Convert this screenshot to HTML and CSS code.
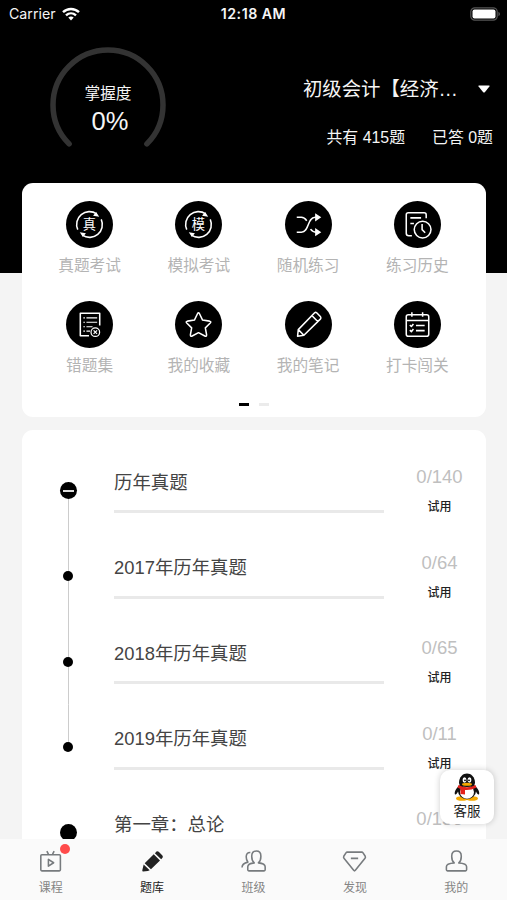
FILE: index.html
```html
<!DOCTYPE html>
<html lang="zh-CN">
<head>
    <meta charset="UTF-8">
    <meta name="viewport" content="width=device-width, initial-scale=1.0">
    <title>题库</title>
    <link rel="stylesheet" href="styles.css">
</head>
<body>
    <div class="app">
        <header class="header">
            <div class="status-bar">
                <div class="carrier">
                    <span>Carrier</span>
                    <svg width="18" height="14" viewBox="0 0 18 14" fill="none" stroke="#fff" stroke-width="2.4">
                        <path d="M1 5.200C5.500 .9 12.500 .9 17 5.200"/>
                        <path d="M4 8.400C6.900 5.700 11.100 5.700 14 8.400"/>
                        <path d="M6.300 10.600C7.900 9.100 10.100 9.100 11.700 10.600L9 13.500Z" fill="#fff" stroke="none"/>
                    </svg>
                </div>
                <span class="time">12:18 AM</span>
                <div class="battery">
                    <svg width="31" height="14" viewBox="0 0 31 14">
                        <rect x=".8" y=".8" width="26.400" height="12.400" rx="4" fill="none" stroke="#555" stroke-width="1.2"/>
                        <rect x="2.500" y="2.500" width="23" height="9" rx="2" fill="#fff"/>
                        <path d="M28.500 4.800C30.300 5.600 30.300 8.400 28.500 9.200Z" fill="#666"/>
                    </svg>
                </div>
            </div>
            <div class="summary">
                <div class="gauge">
                    <svg class="gauge-ring" width="118" height="118" viewBox="0 0 118 118">
                        <path d="M20.100 97.900A55 55 0 1 1 97.900 97.900" fill="none" stroke="#333" stroke-width="5.500" stroke-linecap="round"/>
                    </svg>
                    <div class="gauge-text">
                        <span class="gauge-label">掌握度</span>
                        <span class="gauge-value">0%</span>
                    </div>
                </div>
                <div class="course">
                    <div class="course-name">
                        <span>初级会计【经济…</span>
                        <svg width="12" height="8" viewBox="0 0 12 8"><path d="M1 .5H11Q12 .6 11.400 1.500L7 7Q6 8 5 7L.6 1.500Q0 .6 1 .5Z" fill="#fff"/></svg>
                    </div>
                    <div class="course-stats">
                        <span>共有 415题</span>
                        <span>已答 0题</span>
                    </div>
                </div>
            </div>
        </header>

        <main class="content">
            <section class="card shortcuts">
                <div class="shortcut-grid">
                    <div class="shortcut">
                        <div class="shortcut-icon">
                            <svg viewBox="0 0 46 46">
                                <path d="M11.500 28A12.500 12.500 0 0 1 30 12.600M34.500 18A12.500 12.500 0 0 1 16 33.400"/>
                                <path class="solid" d="M29.500 10.800L32.500 15.500L26.500 14.500ZM16.500 35.200L13.500 30.500L19.500 31.500Z"/>
                                <text x="23" y="27.600">真</text>
                            </svg>
                        </div>
                        <span>真题考试</span>
                    </div>
                    <div class="shortcut">
                        <div class="shortcut-icon">
                            <svg viewBox="0 0 46 46">
                                <path d="M11.500 28A12.500 12.500 0 0 1 30 12.600M34.500 18A12.500 12.500 0 0 1 16 33.400"/>
                                <path class="solid" d="M29.500 10.800L32.500 15.500L26.500 14.500ZM16.500 35.200L13.500 30.500L19.500 31.500Z"/>
                                <text x="23" y="27.600">模</text>
                            </svg>
                        </div>
                        <span>模拟考试</span>
                    </div>
                    <div class="shortcut">
                        <div class="shortcut-icon">
                            <svg viewBox="0 0 46 46">
                                <path d="M11.500 16H16C18.500 16 20 17.500 21.300 19.300M11.500 30.500H16C24 30.500 21.500 16 29.500 16H31M25 27.500C26.300 29.500 28 30.500 31 30.500"/>
                                <path class="solid" d="M29.500 12L35.500 16L29.500 20ZM29.500 26.500L35.500 30.500L29.500 34.500Z"/>
                            </svg>
                        </div>
                        <span>随机练习</span>
                    </div>
                    <div class="shortcut">
                        <div class="shortcut-icon">
                            <svg viewBox="0 0 46 46">
                                <path d="M31.500 17V13.500Q31.500 11.500 29.500 11.500H14Q12 11.500 12 13.500V31.500Q12 34 14.500 34H17.500M16 16.500H26.500M16 22H19.500"/>
                                <circle cx="28" cy="28" r="8.200"/>
                                <path d="M27.500 22.500V28L30.500 31"/>
                            </svg>
                        </div>
                        <span>练习历史</span>
                    </div>
                    <div class="shortcut">
                        <div class="shortcut-icon">
                            <svg viewBox="0 0 46 46">
                                <path d="M33 24V12H14V34H22.500"/>
                                <path class="thin" d="M17 16.500H18.500M20 16.500H30.500M17 20.800H18.500M20 20.800H30.500M17 25.200H18.500M20 25.200H26M17 29.500H18.500M20 29.500H23.500"/>
                                <circle class="thin" cx="28.700" cy="30.500" r="4.200"/>
                                <path class="thin" d="M27 28.800L30.400 32.200M30.400 28.800L27 32.200"/>
                            </svg>
                        </div>
                        <span>错题集</span>
                    </div>
                    <div class="shortcut">
                        <div class="shortcut-icon">
                            <svg viewBox="0 0 46 46">
                                <path d="M23 11.500Q23.500 11.500 24 12.500L27 18.700L33.800 19.700Q35.800 20.200 34.500 21.600L29.700 26.300L30.900 33Q31 35 29.200 34.300L23 31L16.800 34.300Q15 35 15.100 33L16.300 26.300L11.500 21.600Q10.200 20.200 12.200 19.700L19 18.700L22 12.500Q22.500 11.500 23 11.500Z"/>
                            </svg>
                        </div>
                        <span>我的收藏</span>
                    </div>
                    <div class="shortcut">
                        <div class="shortcut-icon">
                            <svg viewBox="0 0 46 46">
                                <path d="M29 11.500Q30 10.700 31 11.500L34.800 15.500Q35.500 16.500 34.800 17.500L18.500 33.500L12.300 34.500L13 28ZM26.500 14.500L32 20M13.500 28.500L18 33M13 28L29 11.500"/>
                            </svg>
                        </div>
                        <span>我的笔记</span>
                    </div>
                    <div class="shortcut">
                        <div class="shortcut-icon">
                            <svg viewBox="0 0 46 46">
                                <rect x="12" y="13.500" width="22" height="21" rx="2"/>
                                <path d="M12 19H34M17.500 11V15.500M28 11V15.500M21.500 24H30M21.500 29H30M15.500 23.500L17 25L19 22.500M15.500 28.500L17 30L19 27.500"/>
                            </svg>
                        </div>
                        <span>打卡闯关</span>
                    </div>
                </div>
                <div class="pager">
                    <i class="page active"></i>
                    <i class="page"></i>
                </div>
            </section>

            <section class="card chapters">
                <div class="chapter">
                    <div class="timeline first"><i class="node open"></i></div>
                    <div class="chapter-title">历年真题</div>
                    <div class="chapter-count"><span>0/140</span><b>试用</b></div>
                </div>
                <div class="chapter">
                    <div class="timeline"><i class="node"></i></div>
                    <div class="chapter-title">2017年历年真题</div>
                    <div class="chapter-count"><span>0/64</span><b>试用</b></div>
                </div>
                <div class="chapter">
                    <div class="timeline"><i class="node"></i></div>
                    <div class="chapter-title">2018年历年真题</div>
                    <div class="chapter-count"><span>0/65</span><b>试用</b></div>
                </div>
                <div class="chapter">
                    <div class="timeline last"><i class="node"></i></div>
                    <div class="chapter-title">2019年历年真题</div>
                    <div class="chapter-count"><span>0/11</span><b>试用</b></div>
                </div>
                <div class="chapter">
                    <div class="timeline single"><i class="node big"></i></div>
                    <div class="chapter-title">第一章：总论</div>
                    <div class="chapter-count"><span>0/136</span></div>
                </div>
            </section>
        </main>

        <div class="service">
            <svg width="26" height="28" viewBox="0 0 26 28">
                <ellipse cx="8" cy="25.500" rx="6" ry="2.300" fill="#f5a800"/>
                <ellipse cx="18" cy="25.500" rx="6" ry="2.300" fill="#f5a800"/>
                <path d="M6 12C2 15 0 19 1 21.500C2 22 3.500 20 4 18.500H22C22.500 20 24 22 25 21.500C26 19 24 15 20 12Z" fill="#111"/>
                <ellipse cx="13" cy="18" rx="9" ry="8.300" fill="#111"/>
                <ellipse cx="13" cy="19" rx="7" ry="6.800" fill="#fff"/>
                <path d="M5 10C5 -2.800 21 -2.800 21 10Q21 14 13 14Q5 14 5 10Z" fill="#111"/>
                <path d="M4.500 12Q13 16.500 21.500 12L22.500 14.500Q17 17.500 11 17V21.500L6.500 21V16L3.500 14.500Z" fill="#e3221c"/>
                <ellipse cx="10.500" cy="7" rx="1.900" ry="2.700" fill="#fff"/>
                <ellipse cx="15.500" cy="7" rx="1.900" ry="2.700" fill="#fff"/>
                <circle cx="11" cy="7.300" r=".9"/>
                <circle cx="15" cy="7.300" r=".9"/>
                <ellipse cx="13" cy="11.200" rx="5" ry="1.500" fill="#f5a800"/>
            </svg>
            <span>客服</span>
        </div>

        <nav class="tabbar">
            <div class="tab">
                <svg viewBox="0 0 24 24">
                    <rect x="2.700" y="5.500" width="18.800" height="15.500" rx="1"/>
                    <path d="M8.500 2L10 5M15.500 2L14 5M10 10V16.500L15 13.200Z"/>
                </svg>
                <i class="badge"></i>
                <span>课程</span>
            </div>
            <div class="tab active">
                <svg viewBox="0 0 24 24">
                    <path class="solid" d="M15 3.300Q16.300 1.200 18 2.700L21.500 6.200Q22.800 7.800 21 9.200L20.300 9.900L14.300 4ZM13.200 5.100L19.200 11L10.500 19.500L4.500 13.600ZM3.500 14.800L9.300 20.400L7.500 21.200L3 21.500Q2 21.500 2.200 20.300Z"/>
                </svg>
                <span>题库</span>
            </div>
            <div class="tab">
                <svg viewBox="0 0 24 24">
                    <path d="M12.700 13.300C11 12 10.300 10 10.300 7C10.300 4 11.700 2 14.700 2S19.100 4 19.100 7C19.100 10 18.400 12 16.700 13.300C20.500 13.700 23.200 15 23.200 17V20Q23.200 21 22.200 21H7.500Q6.500 21 6.500 20V17C6.500 15 9 13.700 12.700 13.300Z"/>
                    <path d="M9 3.300C6.300 3.100 5 4.800 5 7.500C5 9.800 5.500 11.300 6.600 12.600C3.500 13.300 1 14.500 1 17.800"/>
                </svg>
                <span>班级</span>
            </div>
            <div class="tab">
                <svg viewBox="0 0 24 24">
                    <path d="M5 3H19Q19.700 3 20.200 3.700L22.300 7Q22.800 8 22.100 8.900L12.800 20.500Q12 21.500 11.200 20.500L1.900 8.900Q1.200 8 1.700 7L3.800 3.700Q4.300 3 5 3ZM8.500 9H15.500"/>
                </svg>
                <span>发现</span>
            </div>
            <div class="tab">
                <svg viewBox="0 0 24 24">
                    <path d="M9.800 13.400C8 12 7.400 10 7.400 7C7.400 4 8.800 2 12 2S16.600 4 16.600 7C16.600 10 16 12 14.200 13.400C18.500 13.600 21.700 15 21.700 17V20Q21.700 21 20.700 21H3.300Q2.300 21 2.300 20V17C2.300 15 5.500 13.600 9.800 13.400Z"/>
                </svg>
                <span>我的</span>
            </div>
        </nav>
    </div>
</body>
</html>
```

FILE: styles.css
```css
* {
    box-sizing: border-box;
}
body {
    margin: 0;
    font-family: "Liberation Sans", "Noto Sans CJK SC", sans-serif;
    background-color: #f4f4f4;
}
svg {
    display: block;
}
.app {
    position: relative;
    display: flex;
    flex-direction: column;
    height: 900px;
    max-width: 507px;
    overflow: hidden;
}

/* header */
.header {
    flex: none;
    height: 273px;
    background-color: #000;
    color: #f5f5f5;
}
.status-bar {
    display: grid;
    grid-template-columns: 1fr auto 1fr;
    align-items: center;
    height: 27px;
    padding: 0 6px 0 9px;
    font-family: Inter, sans-serif;
    font-size: 14.200px;
}
.carrier {
    display: flex;
    align-items: center;
    gap: 6px;
}
.time {
    font-weight: 600;
    letter-spacing: 0.5px;
    margin-right: 3px;
}
.battery {
    justify-self: end;
}
.summary {
    display: flex;
    justify-content: space-between;
    padding: 19px 14px 0 49px;
}
.gauge {
    position: relative;
    width: 118px;
    height: 118px;
}
.gauge-text {
    position: absolute;
    inset: 0;
    display: flex;
    flex-direction: column;
    align-items: center;
    padding-top: 37px;
}
.gauge-label {
    font-size: 15.700px;
    line-height: 22px;
}
.gauge-value {
    padding-left: 4px;
    font-size: 25.500px;
    line-height: 32px;
}
.course {
    display: flex;
    flex-direction: column;
    align-items: flex-end;
    padding-top: 28px;
}
.course-name {
    display: flex;
    align-items: center;
    gap: 20px;
    padding-right: 3px;
    font-size: 19.400px;
    line-height: 28px;
}
.course-name span {
    padding-top: 1px;
}
.course-stats {
    display: flex;
    gap: 27px;
    margin-top: 22px;
    font-size: 15.900px;
    line-height: 26px;
}

/* cards */
.content {
    position: relative;
    flex: 1;
    display: flex;
    flex-direction: column;
    gap: 13px;
    min-height: 0;
    margin-top: -90px;
    padding: 0 21px 0 22px;
}
.card {
    background-color: #fff;
    border-radius: 11px;
}
.shortcuts {
    flex: none;
    height: 234px;
    padding: 18px 14px 0 13px;
}
.shortcut-grid {
    display: grid;
    grid-template-columns: repeat(4, 1fr);
    grid-auto-rows: 100px;
}
.shortcut {
    display: flex;
    flex-direction: column;
    align-items: center;
    gap: 6px;
    font-size: 15.700px;
    line-height: 24px;
    color: #b4b4b4;
}
.shortcut-icon {
    width: 47px;
    height: 47px;
    border-radius: 50%;
    background-color: #000;
}
.shortcut-icon svg {
    fill: none;
    stroke: #fff;
    stroke-width: 1.5;
    stroke-linejoin: round;
}
.shortcut-icon .thin {
    stroke-width: 1.2;
}
.shortcut-icon .solid {
    fill: #fff;
    stroke: none;
}
.shortcut-icon text {
    fill: #fff;
    stroke: none;
    font-size: 13px;
    text-anchor: middle;
}
.pager {
    display: flex;
    justify-content: center;
    gap: 10px;
    margin-top: 2px;
}
.page {
    width: 10px;
    height: 3px;
    background-color: #ebebeb;
}
.page.active {
    background-color: #000;
}

/* chapter list */
.chapters {
    flex: 1;
    min-height: 0;
    padding-top: 18px;
    overflow: hidden;
    border-radius: 11px 11px 0 0;
}
.chapter {
    display: grid;
    grid-template-columns: 92px 270px 1fr;
    height: 85.500px;
}
.timeline {
    display: flex;
    justify-content: center;
    align-items: center;
    background: linear-gradient(#ccc, #ccc) center / 1px 100% no-repeat;
}
.timeline.first {
    background-size: 1px 50%;
    background-position: center bottom;
}
.timeline.last {
    background-size: 1px 50%;
    background-position: center top;
}
.timeline.single {
    background: none;
}
.node {
    width: 10px;
    height: 10px;
    border-radius: 50%;
    background-color: #000;
}
.node.open,
.node.big {
    display: flex;
    justify-content: center;
    align-items: center;
    width: 17px;
    height: 17px;
}
.node.open::before {
    content: "";
    width: 11px;
    height: 2px;
    background-color: #ddd;
}
.chapter-title {
    height: 65px;
    padding-top: 20.600px;
    border-bottom: 3px solid #e9e9e9;
    font-size: 18.400px;
    line-height: 28px;
    color: #444;
}
.chapter-count {
    display: flex;
    flex-direction: column;
    align-items: center;
    gap: 7px;
    padding: 17px 0 0 9px;
    color: #bfbfbf;
}
.chapter-count span {
    font-size: 18.500px;
    line-height: 24px;
}
.chapter-count b {
    font-size: 12px;
    font-weight: 500;
    line-height: 23px;
    color: #222;
}

/* floating customer service button */
.service {
    position: absolute;
    left: 440px;
    top: 770px;
    display: flex;
    flex-direction: column;
    align-items: center;
    width: 54px;
    height: 54px;
    padding-top: 3px;
    border-radius: 10px;
    background-color: #fff;
    box-shadow: 0 0 6px rgba(0, 0, 0, 0.2);
    font-size: 13.500px;
    line-height: 21px;
    color: #222;
}

/* bottom tabs */
.tabbar {
    flex: none;
    display: grid;
    grid-template-columns: repeat(5, 1fr);
    height: 61px;
    background-color: #fafafa;
}
.tab {
    position: relative;
    display: flex;
    flex-direction: column;
    align-items: center;
    gap: 4px;
    padding-top: 10px;
    font-size: 12px;
    line-height: 20px;
    color: #858585;
}
.tab svg {
    width: 25px;
    height: 25px;
    fill: none;
    stroke: #777b7e;
    stroke-width: 1.5;
    stroke-linejoin: round;
}
.tab .solid {
    fill: #222;
    stroke: none;
}
.tab.active {
    color: #222;
}
.badge {
    position: absolute;
    top: 5px;
    left: 60px;
    width: 10px;
    height: 10px;
    border-radius: 50%;
    background-color: #ff4b4b;
}
```
